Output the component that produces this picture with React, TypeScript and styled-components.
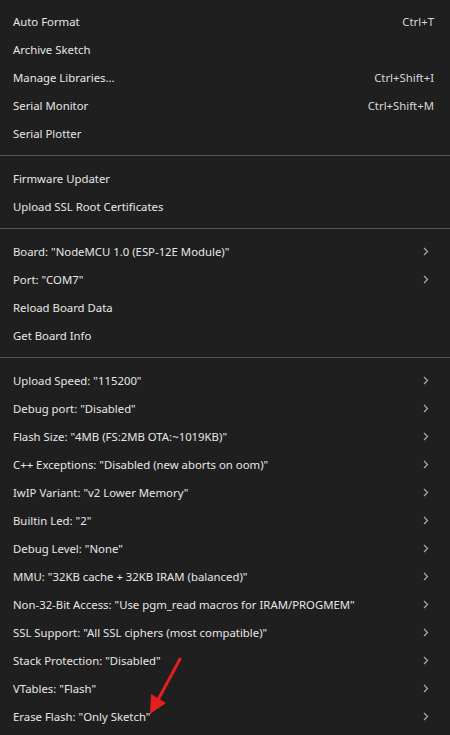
import React from "react";
import styled, { createGlobalStyle } from "styled-components";

const Global = createGlobalStyle`
  html, body { margin: 0; padding: 0; background: #1f1f1f; }
  body { font-family: "Noto Sans", "Open Sans", sans-serif; }
`;

const Menu = styled.div`
  position: relative;
  width: 450px;
  height: 735px;
  overflow: hidden;
  background: #1f1f1f;
  padding-top: 7px;
  box-sizing: border-box;
  font-family: "Noto Sans", sans-serif;
  font-size: 11.35px;
  color: #e6e6e6;
`;

const Row = styled.div`
  display: flex;
  align-items: center;
  height: 28px;
  padding: 0 16px 0 13px;
`;

const Label = styled.span`
  flex: 1;
  white-space: nowrap;
`;

const Shortcut = styled.span`
  color: #d8d8d8;
  white-space: nowrap;
`;

const Divider = styled.div`
  height: 1px;
  background: #555555;
  margin: 8px 0;
`;

const Chevron = styled.svg`
  width: 6px;
  height: 9px;
  margin-right: 5px;
`;

const Arrow = styled.svg`
  position: absolute;
  left: 140px;
  top: 650px;
  width: 50px;
  height: 70px;
  pointer-events: none;
`;

type Item = { label: string; shortcut?: string; sub?: boolean };

const groups: Item[][] = [
  [
    { label: "Auto Format", shortcut: "Ctrl+T" },
    { label: "Archive Sketch" },
    { label: "Manage Libraries...", shortcut: "Ctrl+Shift+I" },
    { label: "Serial Monitor", shortcut: "Ctrl+Shift+M" },
    { label: "Serial Plotter" },
  ],
  [{ label: "Firmware Updater" }, { label: "Upload SSL Root Certificates" }],
  [
    { label: 'Board: "NodeMCU 1.0 (ESP-12E Module)"', sub: true },
    { label: 'Port: "COM7"', sub: true },
    { label: "Reload Board Data" },
    { label: "Get Board Info" },
  ],
  [
    { label: 'Upload Speed: "115200"', sub: true },
    { label: 'Debug port: "Disabled"', sub: true },
    { label: 'Flash Size: "4MB (FS:2MB OTA:~1019KB)"', sub: true },
    { label: 'C++ Exceptions: "Disabled (new aborts on oom)"', sub: true },
    { label: 'IwIP Variant: "v2 Lower Memory"', sub: true },
    { label: 'Builtin Led: "2"', sub: true },
    { label: 'Debug Level: "None"', sub: true },
    { label: 'MMU: "32KB cache + 32KB IRAM (balanced)"', sub: true },
    { label: 'Non-32-Bit Access: "Use pgm_read macros for IRAM/PROGMEM"', sub: true },
    { label: 'SSL Support: "All SSL ciphers (most compatible)"', sub: true },
    { label: 'Stack Protection: "Disabled"', sub: true },
    { label: 'VTables: "Flash"', sub: true },
    { label: 'Erase Flash: "Only Sketch"', sub: true },
  ],
];

export default function App() {
  return (
    <>
      <Global />
      <Menu>
        {groups.map((g, gi) => (
          <React.Fragment key={gi}>
            {gi > 0 && <Divider />}
            {g.map((it) => (
              <Row key={it.label}>
                <Label>{it.label}</Label>
                {it.shortcut && <Shortcut>{it.shortcut}</Shortcut>}
                {it.sub && (
                  <Chevron viewBox="0 0 6 9">
                    <path d="M1 1 L4.5 4.5 L1 8" fill="none" stroke="#a8a8a8" strokeWidth="1.3" />
                  </Chevron>
                )}
              </Row>
            ))}
          </React.Fragment>
        ))}
        <Arrow viewBox="0 0 50 70">
          <line x1="40" y1="9" x2="19" y2="48" stroke="#e21f1f" strokeWidth="3" strokeLinecap="round" />
          <polygon points="10,64 11,44 26,53" fill="#e21f1f" />
        </Arrow>
      </Menu>
    </>
  );
}
